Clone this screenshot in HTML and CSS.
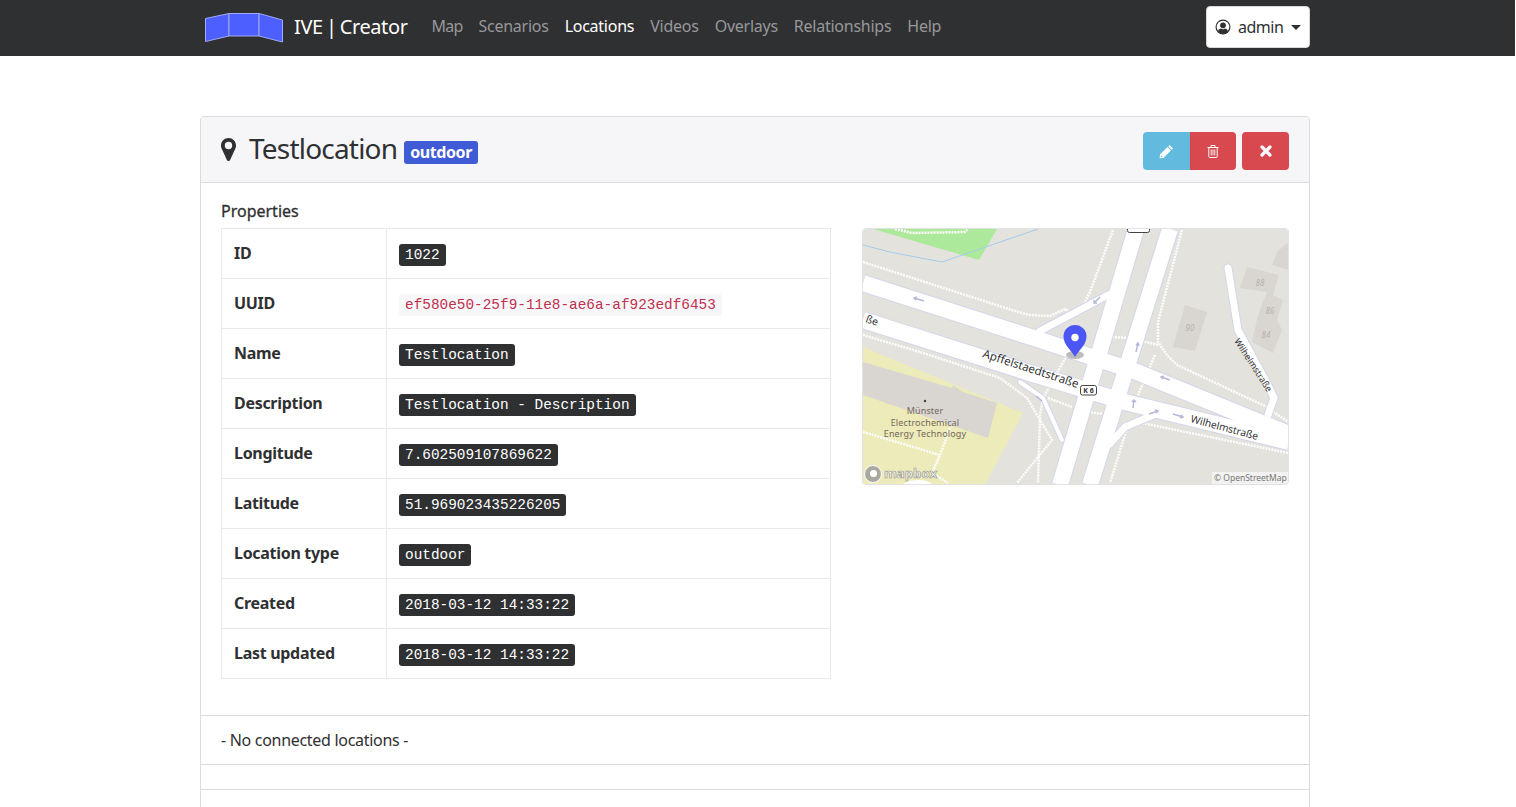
FILE: index.html
```html
<!DOCTYPE html>
<html lang="en">
<head>
<meta charset="utf-8">
<title>IVE | Creator</title>
<link rel="stylesheet" href="styles.css">
</head>
<body>
<nav class="navbar">
  <div class="nav-inner">
    <a class="brand" href="#">
      <svg class="logo" viewBox="205 12 79 31" width="79" height="31" aria-hidden="true">
        <polygon class="logo-panel" points="205.5,18.5 229,13.5 229,36 205.5,41.5"/>
        <polygon class="logo-panel" points="229,13.5 259,13.5 259,36 229,36"/>
        <polygon class="logo-panel" points="259,13.5 282.5,20 282.5,42 259,36"/>
      </svg>
      <span class="brand-text">IVE | Creator</span>
    </a>
    <ul class="nav-links">
      <li><a href="#">Map</a></li>
      <li><a href="#">Scenarios</a></li>
      <li><a class="active" href="#">Locations</a></li>
      <li><a href="#">Videos</a></li>
      <li><a href="#">Overlays</a></li>
      <li><a href="#">Relationships</a></li>
      <li><a href="#">Help</a></li>
    </ul>
    <button class="user-btn" type="button">
      <svg class="user-icon" viewBox="0 0 16 16" width="16" height="16" aria-hidden="true">
        <circle cx="8" cy="8" r="7.5" fill="#2f3032"/>
        <circle cx="8" cy="8" r="6.3" fill="#fff"/>
        <circle cx="8" cy="6.3" r="2.9" fill="#2f3032"/>
        <path d="M2.9 12.2C3.6 10.3 5 9.6 6 9.6c.6.4 1.3.6 2 .6s1.4-.2 2-.6c1 0 2.400.7 3.100 2.600C12 14 10.200 15 8 15s-4-1-5.100-2.800z" fill="#2f3032"/>
      </svg>
      <span class="user-name">admin</span>
      <span class="caret"></span>
    </button>
  </div>
</nav>

<main class="container">
  <section class="card">
    <header class="card-header">
      <div class="title-group">
        <svg class="pin-icon" viewBox="0 0 15 23" width="15" height="23" aria-hidden="true">
          <path fill-rule="evenodd" d="M7.500 0C3.300 0 0 3.300 0 7.500c0 1.700.5 2.900 1.200 4.300L5.900 21.900c.3.700 1 1.100 1.600 1.100s1.300-.4 1.600-1.100l4.700-10.100c.7-1.400 1.200-2.600 1.200-4.300C15 3.300 11.700 0 7.500 0zm0 11.200a3.700 3.700 0 1 1 0-7.400 3.700 3.700 0 0 1 0 7.400z"/>
        </svg>
        <h1 class="title">Testlocation</h1>
        <span class="badge">outdoor</span>
      </div>
      <div class="actions">
        <div class="btn-group">
          <button class="btn btn-info" type="button" aria-label="Edit">
            <svg viewBox="0 0 14 14" width="15" height="15" aria-hidden="true"><path fill="#fff" d="M9.900.9l3.200 3.200-1.300 1.300-3.200-3.200zM7.900 2.900l3.200 3.200-7 7L.6 13.400.9 9.900zM2 10.400l-.3 1.900 1.900-.3z"/></svg>
          </button>
          <button class="btn btn-danger" type="button" aria-label="Delete">
            <svg viewBox="0 0 14 14" width="14" height="14" aria-hidden="true"><path fill="none" stroke="#fff" d="M1.500 3.500h11M5 3.500V1.500h4v2M2.800 3.500v9.200q0 .8.800.8h6.800q.8 0 .8-.8V3.500"/><path stroke="#fff" stroke-width=".9" d="M5.200 5.500v6M7 5.500v6M8.800 5.500v6"/></svg>
          </button>
        </div>
        <button class="btn btn-danger btn-close" type="button" aria-label="Close">
          <svg viewBox="0 0 12 12" width="12" height="12" aria-hidden="true"><path stroke="#fff" stroke-width="3.200" stroke-linecap="round" d="M2 2l8 8M10 2l-8 8"/></svg>
        </button>
      </div>
    </header>

    <div class="card-body">
      <div class="props">
        <div class="props-main">
          <h2 class="props-title">Properties</h2>
          <table class="props-table">
            <tbody>
              <tr><th>ID</th><td><code class="kbd">1022</code></td></tr>
              <tr><th>UUID</th><td><code class="code-light">ef580e50-25f9-11e8-ae6a-af923edf6453</code></td></tr>
              <tr><th>Name</th><td><code class="kbd">Testlocation</code></td></tr>
              <tr><th>Description</th><td><code class="kbd">Testlocation - Description</code></td></tr>
              <tr><th>Longitude</th><td><code class="kbd">7.602509107869622</code></td></tr>
              <tr><th>Latitude</th><td><code class="kbd">51.969023435226205</code></td></tr>
              <tr><th>Location type</th><td><code class="kbd">outdoor</code></td></tr>
              <tr><th>Created</th><td><code class="kbd">2018-03-12 14:33:22</code></td></tr>
              <tr><th>Last updated</th><td><code class="kbd">2018-03-12 14:33:22</code></td></tr>
            </tbody>
          </table>
        </div>
        <div class="map">
          <svg class="map-svg" viewBox="863 229 426 256" width="426" height="256" role="img" aria-label="Map of Apffelstaedtstraße and Wilhelmstraße">
            <rect class="m-land" x="863" y="229" width="426" height="256"/>
            <polygon class="m-green" points="873,229 997,229 979,260"/>
            <polygon class="m-yellow" points="863,347 1023,413 985,485 863,485"/>
            <polyline class="m-water" points="863,245 890,252 942,262 1038,229"/>
            <polygon class="m-building" points="863,362 952,388 953,385 963,392 997,403 988,438 863,395"/>
            <polygon class="m-building" points="1185,305 1207,312 1195,351 1173,347"/>
            <polygon class="m-building" points="1247,267 1279,275 1273,295 1283,300 1277,320 1282,330 1273,353 1252,342 1258,315 1267,292 1240,288"/>
            <polygon class="m-building" points="1277,252 1287,243 1289,243 1289,270 1272,265"/>

            <g class="m-paths">
              <polyline points="895,229 912,233 965,232 968,229"/>
              <polyline points="863,262 1018,312 1030,315 1050,316 1065,309 1072,314"/>
              <polyline points="863,335 920,352 1000,378 1027,398 1052,440 1017,483"/>
              <polyline points="1067,355 1043,398 1040,415 1038,483"/>
              <polyline points="1048,398 1072,407"/>
              <polyline points="863,432 940,455"/>
              <polyline points="950,428 940,455 932,473 948,483"/>
              <polyline points="1113,230 1090,292 1080,312"/>
              <polyline points="1182,230 1158,322 1158,342 1167,355 1177,365 1267,407"/>
              <polyline points="1112,337 1130,338 1158,345"/>
              <polyline points="1273,412 1289,422"/>
              <polyline points="1142,423 1288,453"/>
              <polyline points="1155,355 1138,395"/>
              <polyline points="1088,412 1103,414"/>
              <polyline points="1127,428 1110,483"/>
            </g>
            <ellipse class="m-blob" cx="918" cy="487" rx="16" ry="7"/>

            <g class="m-casing">
              <polyline points="863,283 1037,339 1137,372 1289,434"/>
              <polyline points="863,320 1030,373 1125,402 1289,442"/>
              <polyline points="1136,229 1060,485"/>
              <polyline points="1170,229 1090,485"/>
              <polyline class="thin" points="1040,331 1108,295"/>
              <polyline class="thin" points="1110,444 1125,427 1158,413 1180,416"/>
              <polyline class="ramp" points="1020,382 1043,398 1062,440"/>
              <polyline class="thin" points="1228,268 1238,330 1268,385 1274,398 1268,415"/>
            </g>
            <g class="m-road">
              <polyline points="863,283 1037,339 1137,372 1289,434"/>
              <polyline points="863,320 1030,373 1125,402 1289,442"/>
              <polyline points="1136,229 1060,485"/>
              <polyline points="1170,229 1090,485"/>
              <polyline class="thin" points="1040,331 1108,295"/>
              <polyline class="thin" points="1110,444 1125,427 1158,413 1180,416"/>
              <polyline class="ramp" points="1020,382 1043,398 1062,440"/>
              <polyline class="thin" points="1228,268 1238,330 1268,385 1274,398 1268,415"/>
            </g>

            <g class="m-arrows">
              <path d="M924 301l-10-3m3-1l-3 1 2 2"/>
              <path d="M1136 352l2-9m-2 2l2-2 1 3"/>
              <path d="M1100 297l-6 6m0-3v3h3"/>
              <path d="M1170 380l-9-3m3-1l-3 1 2 2"/>
              <path d="M1149 414l9-3m-3-1l3 1-2 2"/>
              <path d="M1173 414l10 3m-3 1l3-1-2-2"/>
              <path d="M1133 408l1-8m-2 2l2-2 2 2"/>
              <path d="M1036 396l6 5"/>
            </g>

            <g class="m-housenum">
              <text x="1190" y="331">90</text>
              <text x="1260" y="286">88</text>
              <text x="1270" y="314">86</text>
              <text x="1266" y="338">84</text>
            </g>

            <circle class="m-poi" cx="925" cy="401" r="1.200"/>
            <g class="m-poi-label">
              <text x="925" y="414">Münster</text>
              <text x="925" y="426">Electrochemical</text>
              <text x="925" y="437">Energy Technology</text>
            </g>

            <g class="m-street">
              <text transform="translate(865 322) rotate(18)">ße</text>
              <text class="long" transform="translate(982 357) rotate(18)">Apffelstaedtstraße</text>
              <text class="mid" transform="translate(1190 422) rotate(15)">Wilhelmstraße</text>
              <text class="small" transform="translate(1234 341) rotate(57)">Wilhelmstraße</text>
            </g>

            <rect class="m-shield" x="1080.500" y="385.500" width="16" height="9.500" rx="2"/>
            <text class="m-shield-text" x="1088.500" y="393">K 6</text>
            <rect class="m-shield" x="1127.500" y="224" width="22" height="8.500" rx="2"/>

            <ellipse class="m-pin-shadow" cx="1075" cy="355" rx="9" ry="4"/>
            <path class="m-pin" d="M1075 357c-3-6-11.500-12-11.500-20.500a11.500 11.500 0 0 1 23 0c0 8.500-8.500 14.500-11.500 20.500z"/>
            <circle class="m-pin-dot" cx="1075" cy="337.500" r="3.700"/>

            <rect class="m-attr-bg" x="1212" y="472" width="77" height="13"/>
            <text class="m-attr" x="1214" y="481">© OpenStreetMap</text>

            <circle class="m-logo-ring" cx="873" cy="474" r="8.500"/>
            <circle class="m-logo-dot" cx="873.500" cy="473.500" r="3.500"/>
            <text class="m-logo-text" x="884" y="478">mapbox</text>
          </svg>
        </div>
      </div>
    </div>

    <div class="card-section">- No connected locations -</div>
    <div class="card-section card-gap"></div>
    <div class="card-section card-rest"></div>
  </section>
</main>
</body>
</html>
```

FILE: styles.css
```css
* { box-sizing: border-box; }

html, body {
  margin: 0;
  height: 100vh;
  overflow: hidden;
  background: #fff;
}

body {
  font-family: "Noto Sans", "Open Sans", sans-serif;
  font-size: 16px;
  line-height: 24px;
  color: #2f3032;
  padding-right: 1px;
}

a { text-decoration: none; color: inherit; }

.navbar {
  height: 56px;
  background: #2f3032;
}

.nav-inner {
  width: 1110px;
  margin-left: 200px;
  height: 56px;
  display: flex;
  align-items: center;
}

.brand {
  display: flex;
  align-items: center;
  margin-left: 5px;
  color: #fff;
}

.logo { display: block; margin-top: -1px; }

.logo-panel {
  fill: #4d5fff;
  stroke: #a2a9f5;
  stroke-width: 1;
}

.brand-text {
  margin-left: 10px;
  font-size: 20px;
  letter-spacing: -0.4px;
  word-spacing: -1.6px;
  line-height: 30px;
  margin-top: -3px;
}

.nav-links {
  display: flex;
  list-style: none;
  margin: -4px auto 0 16px;
  padding: 0;
}

.nav-links a {
  display: block;
  padding: 0 8px;
  color: #97989a;
  letter-spacing: -0.25px;
}

.nav-links li:first-child a { letter-spacing: -0.8px; }

.nav-links a.active { color: #fff; }

.user-btn {
  display: flex;
  align-items: center;
  width: 104px;
  height: 42px;
  margin-top: -2px;
  padding: 0 8px;
  background: #fff;
  border: 1px solid #d8d8d8;
  border-radius: 4px;
  font: inherit;
  color: #2f3032;
}

.user-icon { flex: none; margin-right: 7px; }

.user-name { letter-spacing: -0.5px; }

.caret {
  margin-left: 8px;
  width: 0;
  height: 0;
  border-top: 5px solid #2f3032;
  border-left: 5px solid transparent;
  border-right: 5px solid transparent;
}

.container {
  width: 1110px;
  margin: 60px 0 0 200px;
}

.card {
  border: 1px solid #dcdcdf;
  border-radius: 4px;
  background: #fff;
}

.card-header {
  height: 66px;
  padding: 1px 20px 0;
  display: flex;
  align-items: center;
  justify-content: space-between;
  background: #f6f6f9;
  border-bottom: 1px solid #dcdcdf;
  border-radius: 3px 3px 0 0;
}

.title-group {
  display: flex;
  align-items: center;
}

.pin-icon { fill: #2f3032; display: block; margin-top: -2px; }

.title {
  margin: -5px 0 0 13px;
  font-size: 28px;
  font-weight: 400;
  line-height: 34px;
  letter-spacing: -0.8px;
}

.badge {
  margin-left: 7px;
  margin-top: 5px;
  height: 23px;
  padding: 0 6px;
  background: #3f5bd6;
  color: #fff;
  border-radius: 3px;
  font-size: 16px;
  font-weight: 700;
  line-height: 23px;
  letter-spacing: -0.42px;
}

.actions {
  display: flex;
  gap: 6px;
  margin-top: 2px;
}

.btn-group { display: flex; }

.btn {
  display: flex;
  align-items: center;
  justify-content: center;
  width: 47px;
  height: 38px;
  padding: 0;
  border: 0;
  border-radius: 4px;
  color: #fff;
}

.btn-info { background: #62bbdf; border-radius: 4px 0 0 4px; }
.btn-danger { background: #d7484f; }
.btn-group .btn-danger { width: 46px; border-radius: 0 4px 4px 0; }

.card-body { padding: 16px 20px 36px; }

.props {
  display: grid;
  grid-template-columns: 610px 427px;
  column-gap: 31px;
}

.props-title {
  margin: 0 0 5px;
  font-size: 16px;
  font-weight: 400;
  -webkit-text-stroke: 0.3px #2f3032;
  line-height: 24px;
  letter-spacing: 0;
}

.props-table {
  width: 610px;
  border-collapse: collapse;
  table-layout: fixed;
}

.props-table tr { height: 50px; }

.props-table th,
.props-table td {
  border: 1px solid #e9e9ec;
  padding: 0 12px;
}

.props-table th {
  width: 165px;
  text-align: left;
  font-weight: 700;
  letter-spacing: -0.3px;
  padding-bottom: 1px;
}

.kbd,
.code-light {
  display: inline-block;
  height: 22px;
  padding: 0 6px;
  font-family: "Liberation Mono", monospace;
  font-size: 14.4px;
  line-height: 22px;
  border-radius: 3px;
  vertical-align: middle;
}

.kbd { background: #2f3032; color: #fff; }
.code-light { background: #f7f7f9; color: #c0304f; }

.map {
  margin-top: 29px;
  height: 257px;
  border-radius: 4px;
  border: 1px solid #e2e2e2;
  overflow: hidden;
}

.map-svg { display: block; }

.m-land { fill: #e4e2dd; }
.m-green { fill: #ade99b; }
.m-yellow { fill: #ecebb9; }
.m-water { fill: none; stroke: #a5cbe8; stroke-width: 1; }
.m-building { fill: #d9d6d1; }
.m-blob { fill: #fff; }

.m-paths polyline {
  fill: none;
  stroke: #fdfdfd;
  stroke-width: 2.500;
  stroke-dasharray: 2 1;
}

.m-casing polyline {
  fill: none;
  stroke: #d4d5ea;
  stroke-width: 18;
}

.m-casing polyline.thin { stroke-width: 9; stroke-linecap: round; }
.m-casing polyline.ramp { stroke-width: 6; stroke-linecap: round; }

.m-road polyline {
  fill: none;
  stroke: #fff;
  stroke-width: 16;
}

.m-road polyline.thin { stroke-width: 7; stroke-linecap: round; }
.m-road polyline.ramp { stroke-width: 4; stroke-linecap: round; }

.m-arrows path {
  fill: none;
  stroke: #b5b9d8;
  stroke-width: 1.500;
}

.m-housenum text {
  font-family: "Noto Sans", sans-serif;
  font-size: 8px;
  font-style: italic;
  fill: #b5b1ac;
  text-anchor: middle;
}

.m-poi { fill: #4a3c30; }

.m-poi-label text {
  font-family: "Noto Sans", sans-serif;
  font-size: 9px;
  fill: #75695c;
  text-anchor: middle;
  letter-spacing: 0.15px;
}

.m-street text {
  font-family: "Noto Sans", sans-serif;
  font-size: 10.500px;
  fill: #333;
}

.m-street text.long { font-size: 11.500px; }
.m-street text.mid { font-size: 10.200px; }
.m-street text.small { font-size: 9px; }

.m-shield { fill: #fff; stroke: #444; stroke-width: 1; }

.m-shield-text {
  font-family: "Noto Sans", sans-serif;
  font-size: 7px;
  font-weight: 700;
  fill: #333;
  text-anchor: middle;
}

.m-pin-shadow { fill: #8f8f8f; opacity: .6; }
.m-pin { fill: #4b56f5; }
.m-pin-dot { fill: #fff; }
.m-attr-bg { fill: #fff; opacity: .55; }

.m-attr {
  font-family: "Noto Sans", sans-serif;
  font-size: 8.500px;
  fill: #777;
}

.m-logo-ring { fill: #a9a9a0; stroke: #fff; stroke-width: 1; }
.m-logo-dot { fill: #fff; }

.m-logo-text {
  font-family: "Noto Sans", sans-serif;
  font-size: 13.200px;
  font-weight: 700;
  fill: #f4f4ee;
  stroke: #9b9b92;
  stroke-width: 0.7px;
}

.card-section {
  border-top: 1px solid #dcdcdf;
  padding: 12px 20px;
  letter-spacing: -0.3px;
}

.card-gap { height: 25px; padding: 0; }
.card-rest { height: 120px; }
```
